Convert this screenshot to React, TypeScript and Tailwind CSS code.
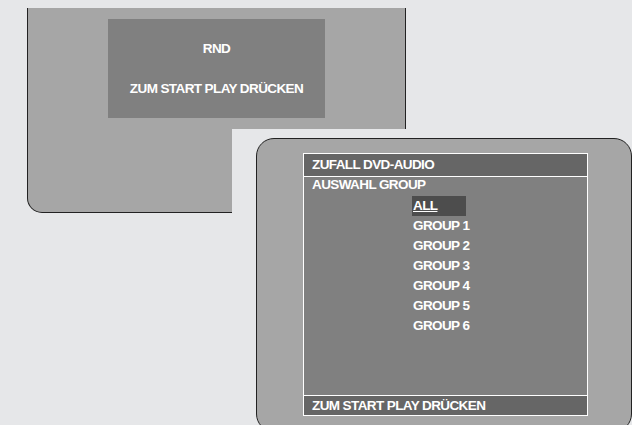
const FONT = { fontFamily: '"Liberation Sans", Arial, sans-serif' }

const groups = ['GROUP 1', 'GROUP 2', 'GROUP 3', 'GROUP 4', 'GROUP 5', 'GROUP 6']

function RandomScreen() {
  return (
    <div className="ml-[27px] h-[205px] w-[379px] rounded-bl-[15px] border-x border-b border-[#222] bg-[#a6a6a6] pl-[80px] pt-[11px]">
      <div className="flex h-[99px] w-[217px] flex-col items-center bg-[#808080] pt-[22px]">
        <span className="leading-[16px]">RND</span>
        <span className="mt-[24px] leading-[16px]">ZUM START PLAY DRÜCKEN</span>
      </div>
    </div>
  )
}

function GroupMenu() {
  return (
    <div className="h-[294px] w-[376px] rounded-[18px] border border-[#222] bg-[#a6a6a6] pl-[46px] pt-[14px]">
      <div className="flex h-[263px] w-[285px] flex-col border border-white bg-[#808080]">
        <div className="h-[23px] border-b border-white bg-[#666] pl-[8px] leading-[22px]">
          ZUFALL DVD-AUDIO
        </div>
        <div className="flex-1 pl-[8px]">
          <div className="leading-[16px]">AUSWAHL GROUP</div>
          <ul className="mt-[3px] pl-[100px]">
            <li className="h-[20px] leading-[20px]">
              <span className="inline-block w-[54px] bg-[#4d4d4d] pl-[1px] underline underline-offset-[1px]">
                ALL
              </span>
            </li>
            {groups.map((g) => (
              <li key={g} className="h-[20px] pl-[1px] leading-[20px]">
                {g}
              </li>
            ))}
          </ul>
        </div>
        <div className="h-[20px] border-t border-white bg-[#666] pl-[8px] leading-[19px]">
          ZUM START PLAY DRÜCKEN
        </div>
      </div>
    </div>
  )
}

export default function App() {
  return (
    <div
      className="relative h-[425px] w-[632px] overflow-hidden bg-[#e6e7e9] pt-[8px] text-[13.5px] font-bold tracking-[-0.6px] text-white"
      style={FONT}
    >
      <RandomScreen />

      {/* second screenshot laid over the first one */}
      <div className="absolute bottom-0 left-[232px] right-0 top-[129px] bg-[#e6e7e9] pl-[24px] pt-[9px]">
        <GroupMenu />
      </div>
    </div>
  )
}
